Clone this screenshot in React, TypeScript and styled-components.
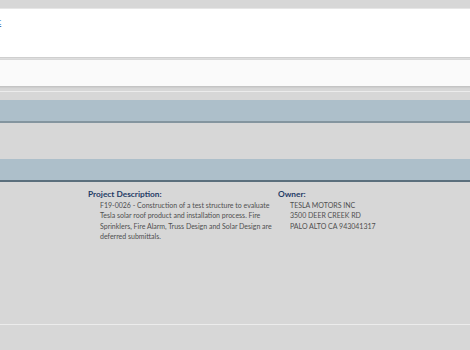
import React from 'react';
import styled, { createGlobalStyle } from 'styled-components';

const GlobalStyle = createGlobalStyle`
  html, body {
    margin: 0;
    padding: 0;
    background: #d7d7d7;
    font-family: Lato, "Open Sans", "Liberation Sans", sans-serif;
    overflow: hidden;
  }
`;

const Page = styled.div`
  width: 470px;
  height: 350px;
  display: flex;
  flex-direction: column;
  padding-top: 8px;
  box-sizing: border-box;
`;

const Card = styled.div`
  height: 50px;
  background: #ffffff;
  border-top: 1px solid #e6e6e6;
  border-bottom: 1px solid #cfcfcf;
  box-shadow: 0 1px 1px #dedede;
  padding-top: 8px;
  box-sizing: border-box;
  overflow: hidden;
`;

const CutLink = styled.a`
  display: block;
  margin-left: -3px;
  font-size: 9px;
  line-height: 9px;
  color: #3b7fc4;
  text-decoration: underline;
`;

const SubBar = styled.div`
  height: 26px;
  margin-top: 2px;
  background: #fafafa;
  border-bottom: 1px solid #c4c4c4;
  box-shadow: 0 1px 1px #cdcdcd;
`;

const Rule = styled.div<{ $top: number }>`
  margin-top: ${(p) => p.$top}px;
  height: 1px;
  background: #ececec;
`;

const SectionBar = styled.div<{ $top: number; $edge: string }>`
  margin-top: ${(p) => p.$top}px;
  height: 21px;
  background: #adbfca;
  border-bottom: 2px solid ${(p) => p.$edge};
`;

const Details = styled.div`
  display: flex;
  padding: 7px 0 0 88px;
`;

const Column = styled.div<{ $width: number }>`
  width: ${(p) => p.$width}px;
`;

const Label = styled.div`
  font-size: 8.3px;
  font-weight: 700;
  color: #1f3b66;
  line-height: 10px;
  margin-bottom: 1px;
`;

const Body = styled.div`
  padding-left: 12px;
  font-size: 7px;
  line-height: 10.4px;
  color: #4f4f4f;
`;

export default function App() {
  return (
    <>
      <GlobalStyle />
      <Page>
        <Card>
          <CutLink>c</CutLink>
        </Card>
        <SubBar />
        <Rule $top={4} />
        <SectionBar $top={8} $edge="#84959f" />
        <SectionBar $top={36} $edge="#5b6f7d" />
        <Details>
          <Column $width={190}>
            <Label>Project Description:</Label>
            <Body>
              F19-0026 - Construction of a test structure to evaluate Tesla solar roof product
              and installation process. Fire Sprinklers, Fire Alarm, Truss Design and Solar
              Design are deferred submittals.
            </Body>
          </Column>
          <Column $width={150}>
            <Label>Owner:</Label>
            <Body>
              TESLA MOTORS INC
              <br />
              3500 DEER CREEK RD
              <br />
              PALO ALTO CA 943041317
            </Body>
          </Column>
        </Details>
        <Rule $top={82} />
      </Page>
    </>
  );
}
